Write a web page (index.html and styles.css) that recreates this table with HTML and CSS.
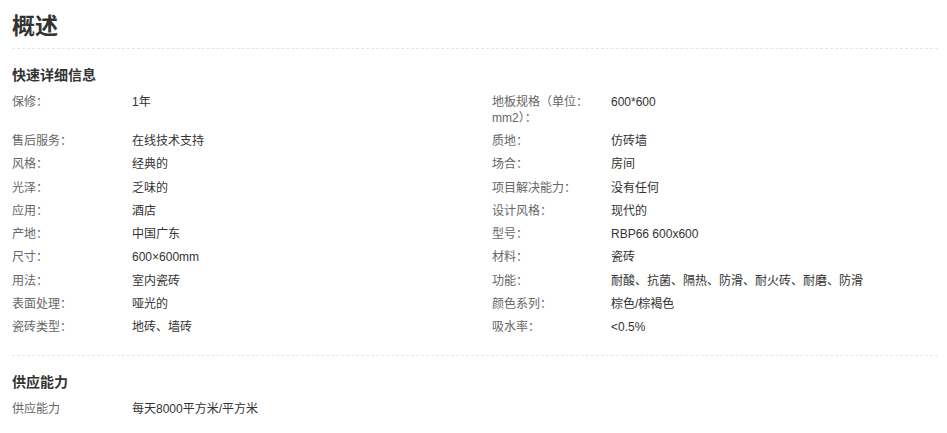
FILE: index.html
```html
<!DOCTYPE html>
<html lang="zh">
<head>
<meta charset="utf-8">
<title>概述</title>
<link rel="stylesheet" href="styles.css">
</head>
<body>
<div class="page">
  <h1 class="title">概述</h1>
  <section class="section">
    <h2 class="section-title">快速详细信息</h2>
    <div class="attrs">
      <div class="label">保修：</div><div class="value">1年</div>
      <div class="label">地板规格（单位：mm2）：</div><div class="value">600*600</div>

      <div class="label">售后服务：</div><div class="value">在线技术支持</div>
      <div class="label">质地：</div><div class="value">仿砖墙</div>

      <div class="label">风格：</div><div class="value">经典的</div>
      <div class="label">场合：</div><div class="value">房间</div>

      <div class="label">光泽：</div><div class="value">乏味的</div>
      <div class="label">项目解决能力：</div><div class="value">没有任何</div>

      <div class="label">应用：</div><div class="value">酒店</div>
      <div class="label">设计风格：</div><div class="value">现代的</div>

      <div class="label">产地：</div><div class="value">中国广东</div>
      <div class="label">型号：</div><div class="value">RBP66 600x600</div>

      <div class="label">尺寸：</div><div class="value">600×600mm</div>
      <div class="label">材料：</div><div class="value">瓷砖</div>

      <div class="label">用法：</div><div class="value">室内瓷砖</div>
      <div class="label">功能：</div><div class="value">耐酸、抗菌、隔热、防滑、耐火砖、耐磨、防滑</div>

      <div class="label">表面处理：</div><div class="value">哑光的</div>
      <div class="label">颜色系列：</div><div class="value">棕色/棕褐色</div>

      <div class="label">瓷砖类型：</div><div class="value">地砖、墙砖</div>
      <div class="label">吸水率：</div><div class="value">&lt;0.5%</div>
    </div>
  </section>
  <section class="section section-last">
    <h2 class="section-title">供应能力</h2>
    <div class="attrs attrs-single">
      <div class="label">供应能力</div><div class="value">每天8000平方米/平方米</div>
    </div>
  </section>
</div>
</body>
</html>
```

FILE: styles.css
```css
html, body {
  margin: 0;
  padding: 0;
  background: #fff;
}

body {
  font-family: "Liberation Sans", Arial, "Noto Sans CJK SC", sans-serif;
  color: #333;
  font-size: 12px;
}

.page {
  width: 926px;
  padding: 10px 0 0 12px;
}

.title {
  margin: 0;
  font-size: 23px;
  line-height: 32px;
  font-weight: bold;
  color: #333;
  padding-bottom: 6px;
  border-bottom: 1px dashed #e6e6e6;
}

.section {
  padding-top: 16px;
  padding-bottom: 12px;
  border-bottom: 1px dashed #e6e6e6;
}

.section-last {
  border-bottom: none;
  padding-top: 16px;
}

.section-title {
  margin: 0 0 10px 0;
  font-size: 14px;
  line-height: 20px;
  font-weight: bold;
  color: #333;
}

.attrs {
  display: grid;
  grid-template-columns: 120px 360px 119px 1fr;
  row-gap: 7.5px;
  line-height: 15.75px;
  padding-bottom: 7.5px;
}

.attrs-single {
  grid-template-columns: 120px 1fr;
}

.label {
  font-family: "Liberation Sans", Arial, "Noto Sans CJK TC", sans-serif;
  color: #666;
  padding-right: 10px;
}

.value {
  color: #333;
}
```
